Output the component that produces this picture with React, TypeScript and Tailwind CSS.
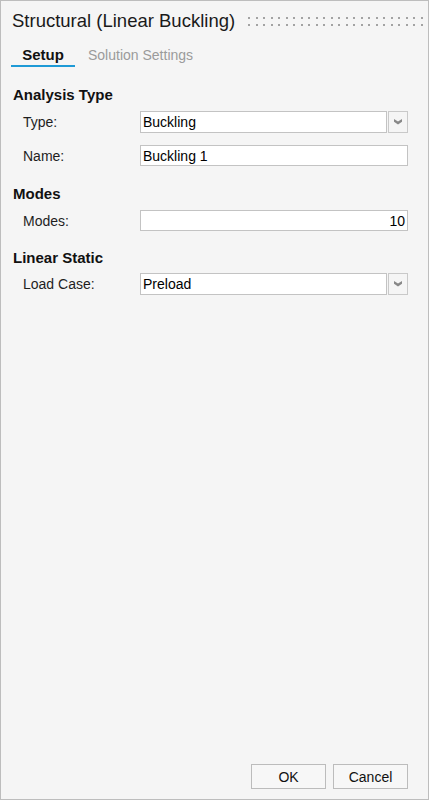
type FieldProps = { label: string; value: string; kind: "select" | "text" | "number" };

function Chevron() {
  return (
    <svg width="8" height="6" viewBox="0 0 8 6">
      <polygon points="0,0 4,2.5 8,0 8,2.8 4,5.5 0,2.8" fill="#888888" />
    </svg>
  );
}

function Grip() {
  const cols = Array.from({ length: 24 }, (_, i) => i);
  return (
    <svg width="176" height="10" viewBox="0 0 176 10" shapeRendering="crispEdges">
      {cols.map((i) => (
        <g key={i} fill="#a3a3a3">
          <rect x={Math.round(i * 7.5)} y="1" width="2" height="2" />
          <rect x={Math.round(i * 7.5)} y="8" width="2" height="2" />
        </g>
      ))}
    </svg>
  );
}

function Field({ label, value, kind }: FieldProps) {
  return (
    <div className="flex items-center">
      <div className="w-[127px] pl-[10px] text-[#1e1e1e]">{label}</div>
      {kind === "select" ? (
        <div className="flex h-[22px] w-[268px] gap-[1px]">
          <div className="flex flex-1 items-center border border-[#c3c3c3] bg-white pl-[2px] text-black">{value}</div>
          <div className="flex w-[20px] items-center justify-center border border-[#c9c9c9] bg-[#f5f5f5]">
            <Chevron />
          </div>
        </div>
      ) : (
        <div
          className={
            kind === "number"
              ? "flex h-[21px] w-[268px] items-center justify-end border border-[#c3c3c3] bg-white pr-[2px] text-black"
              : "flex h-[21px] w-[268px] items-center border border-[#c3c3c3] bg-white pl-[2px] text-black"
          }
        >
          {value}
        </div>
      )}
    </div>
  );
}

export default function App() {
  return (
    <main className="w-[430px] h-[801px] bg-white">
      <div className="flex h-[800px] w-[429px] flex-col border border-[#bdbdbd] bg-[#f5f5f5] font-['Liberation_Sans',Arial,sans-serif] text-[14px] leading-[16px]">
        {/* header */}
        <div className="flex h-[40px] items-center pl-[11px] pr-[4px]">
          <h1 className="text-[18.5px] leading-[22px] text-[#1a1a1a]">Structural (Linear Buckling)</h1>
          <div className="ml-auto flex">
            <Grip />
          </div>
        </div>

        {/* tabs */}
        <div className="flex pl-[10px]">
          <div className="w-[64px] border-b-2 border-[#1e9ad6] pt-[6px] pb-[2px] text-center text-[15px] font-bold text-[#111]">
            Setup
          </div>
          <div className="ml-[13px] pt-[6px] text-[#9b9b9b]">Solution Settings</div>
        </div>

        {/* content */}
        <div className="flex flex-col pl-[12px]">
          <h2 className="mt-[19px] text-[15px] font-bold leading-[18px] text-[#111]">Analysis Type</h2>
          <div className="mt-[7px]">
            <Field label="Type:" value="Buckling" kind="select" />
          </div>
          <div className="mt-[12px]">
            <Field label="Name:" value="Buckling 1" kind="text" />
          </div>

          <h2 className="mt-[19px] text-[15px] font-bold leading-[18px] text-[#111]">Modes</h2>
          <div className="mt-[7px]">
            <Field label="Modes:" value="10" kind="number" />
          </div>

          <h2 className="mt-[18px] text-[15px] font-bold leading-[18px] text-[#111]">Linear Static</h2>
          <div className="mt-[6px]">
            <Field label="Load Case:" value="Preload" kind="select" />
          </div>
        </div>

        {/* footer */}
        <div className="mt-auto flex justify-end gap-[7px] pr-[20px] pb-[10px]">
          <button className="h-[25px] w-[75px] border border-[#bcbcbc] bg-[#f7f7f7] text-[#111]">OK</button>
          <button className="h-[25px] w-[75px] border border-[#bcbcbc] bg-[#f7f7f7] text-[#111]">Cancel</button>
        </div>
      </div>
    </main>
  );
}
